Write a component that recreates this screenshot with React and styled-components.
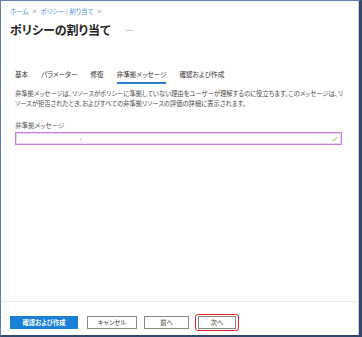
import React from "react";
import styled, { createGlobalStyle } from "styled-components";

const Global = createGlobalStyle`
  html, body { margin: 0; padding: 0; background: #fff; }
  body {
    font-family: "Noto Sans CJK JP", "Noto Sans", sans-serif;
    font-feature-settings: "palt";
  }
  * { box-sizing: border-box; }
`;

const Frame = styled.div`
  width: 362px;
  height: 337px;
  display: flex;
  flex-direction: column;
  background: #fff;
  border-top: 1px solid #5f80ad;
  border-left: 1px solid #5f80ad;
  border-right: 3px solid #33486a;
  border-bottom: 2px solid #33486a;
  box-shadow: inset -1px 0 0 #c9ced6;
`;

const Header = styled.header`
  padding: 5px 0 0 9px;
`;

const Crumbs = styled.nav`
  display: flex;
  align-items: center;
  gap: 4px;
  font-size: 6.5px;
  line-height: 10px;
  color: #4a8fd6;
`;

const Sep = styled.span`
  color: #8a8a8a;
  font-size: 7px;
`;

const TitleRow = styled.div`
  display: flex;
  align-items: center;
  margin-top: 6px;
  height: 16px;
`;

const Title = styled.h1`
  margin: 0;
  font-size: 12px;
  line-height: 16px;
  font-weight: 700;
  color: #252423;
`;

const More = styled.span`
  margin-left: 15px;
  font-size: 8px;
  color: #6b6b6b;
  letter-spacing: 0.5px;
`;

const Body = styled.main`
  flex: 1;
  padding: 31px 17px 0 14px;
  display: flex;
  flex-direction: column;
`;

const Tabs = styled.div`
  display: flex;
  gap: 13px;
`;

const Tab = styled.div`
  font-size: 6.6px;
  line-height: 10px;
  color: #323130;
  padding-bottom: 3px;
  border-bottom: 2px solid ${(p) => (p.$active ? "#2c7ccf" : "transparent")};
  white-space: nowrap;
`;

const Desc = styled.p`
  margin: 5px 0 0;
  font-size: 6.3px;
  line-height: 10px;
  color: #4b4a49;
  white-space: nowrap;
`;

const Label = styled.div`
  margin-top: 11px;
  font-size: 6.5px;
  line-height: 10px;
  color: #555;
`;

const InputBox = styled.div`
  margin-top: 2px;
  height: 13px;
  border: 1px solid #c47fd7;
  box-shadow: inset 0 0 0 1px #ecd5f3;
  display: flex;
  align-items: center;
  justify-content: flex-end;
  padding-right: 3px;
  position: relative;
`;

const Dot = styled.span`
  position: absolute;
  left: 64px;
  top: 6px;
  width: 1px;
  height: 1px;
  background: #9a9a9a;
`;

const Footer = styled.footer`
  border-top: 1px solid #ebebeb;
  padding: 12px 0 4px 9px;
  display: flex;
  align-items: center;
`;

const Button = styled.button`
  height: 13px;
  width: ${(p) => p.$w}px;
  margin-left: ${(p) => p.$ml || 0}px;
  padding: 0;
  font-family: inherit;
  font-feature-settings: "palt";
  font-size: 6.3px;
  line-height: 11px;
  font-weight: ${(p) => (p.$primary ? 700 : 400)};
  color: ${(p) => (p.$primary ? "#fff" : "#323130")};
  background: ${(p) => (p.$primary ? "#1a7fd6" : "#fff")};
  border: 1px solid ${(p) => (p.$primary ? "#1a7fd6" : "#8a8886")};
  border-radius: 0;
`;

const Highlight = styled.div`
  margin-left: ${(p) => p.$ml}px;
  padding: 1px 2px;
  border: 1.5px solid #e8202a;
  border-radius: 3px;
  display: flex;
`;

export default function App() {
  return (
    <>
      <Global />
      <Frame>
        <Header>
          <Crumbs>
            <span>ホーム</span>
            <Sep>&gt;</Sep>
            <span>ポリシー | 割り当て</span>
            <Sep>&gt;</Sep>
          </Crumbs>
          <TitleRow>
            <Title>ポリシーの割り当て</Title>
            <More>…</More>
          </TitleRow>
        </Header>
        <Body>
          <Tabs>
            <Tab>基本</Tab>
            <Tab>パラメーター</Tab>
            <Tab>修復</Tab>
            <Tab $active>非準拠メッセージ</Tab>
            <Tab>確認および作成</Tab>
          </Tabs>
          <Desc>
            非準拠メッセージは、リソースがポリシーに準拠していない理由をユーザーが理解するのに役立ちます。このメッセージは、リ
            <br />
            ソースが拒否されたとき、およびすべての非準拠リソースの評価の詳細に表示されます。
          </Desc>
          <Label>非準拠メッセージ</Label>
          <InputBox>
            <Dot />
            <svg width="7" height="6" viewBox="0 0 7 6">
              <path d="M0.8 3.2 L2.6 5 L6.3 1" fill="none" stroke="#8cc63f" strokeWidth="1" />
            </svg>
          </InputBox>
        </Body>
        <Footer>
          <Button $primary $w={68}>確認および作成</Button>
          <Button $w={50} $ml={9}>キャンセル</Button>
          <Button $w={45} $ml={7}>前へ</Button>
          <Highlight $ml={6}>
            <Button $w={38}>次へ</Button>
          </Highlight>
        </Footer>
      </Frame>
    </>
  );
}
